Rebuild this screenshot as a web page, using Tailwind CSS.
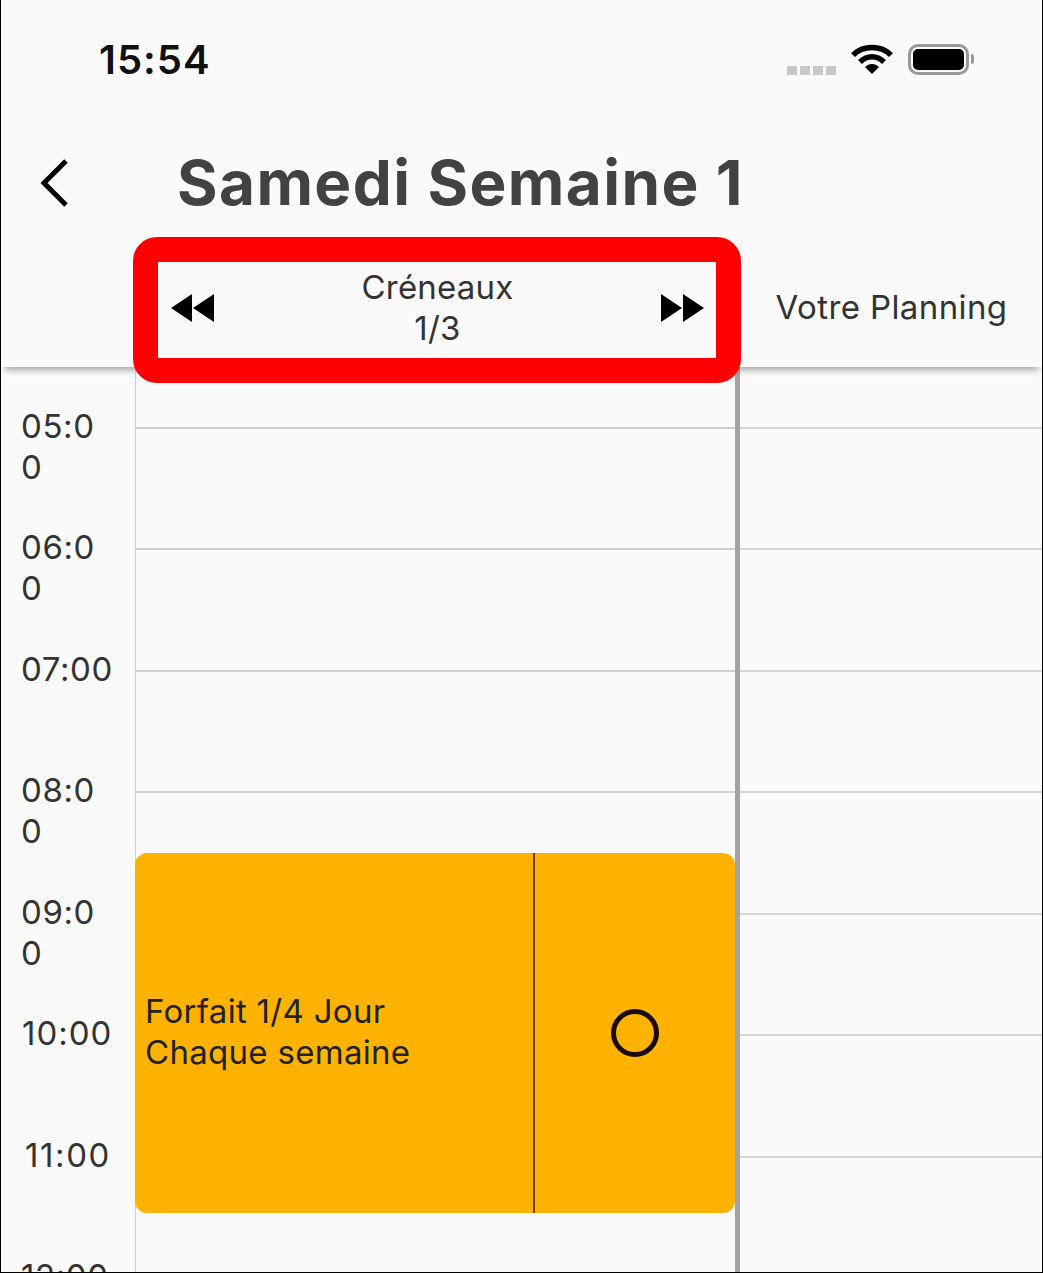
<!DOCTYPE html>
<html lang="fr">
<head>
    <meta charset="UTF-8">
    <meta name="viewport" content="width=device-width, initial-scale=1.0">
    <title>Samedi Semaine 1</title>
    <script src="https://cdn.jsdelivr.net/npm/@tailwindcss/browser@4"></script>
</head>

<body class="bg-[#fafafa]">
    <div class="relative flex h-[1273px] w-[1043px] flex-col overflow-hidden border-r border-b border-l border-black bg-[#fafafa] font-['Inter',sans-serif] text-[#333]">

        <!-- Status bar -->
        <div class="flex h-[120px] shrink-0 items-center pl-[98px] pr-[68px]">
            <span class="text-[40px] leading-none font-semibold tracking-[1px] text-[#111]">15:54</span>
            <div class="mb-[2px] ml-auto flex items-center">
                <div class="mt-[22px] flex gap-[3px]">
                    <span class="h-[9px] w-[10px] bg-[#c8c8c8]"></span>
                    <span class="h-[9px] w-[10px] bg-[#c8c8c8]"></span>
                    <span class="h-[9px] w-[10px] bg-[#c8c8c8]"></span>
                    <span class="h-[9px] w-[10px] bg-[#c8c8c8]"></span>
                </div>
                <svg class="ml-[15px]" width="42" height="30" viewBox="0 0 42 30">
                    <path d="M2 11 C12 1 30 1 40 11" fill="none" stroke="#000" stroke-width="5.5"/>
                    <path d="M9 18 C16 11 26 11 33 18" fill="none" stroke="#000" stroke-width="5.5"/>
                    <path d="M14 23 C18 19 24 19 28 23 L21 30 Z" fill="#000"/>
                </svg>
                <div class="ml-[15px] flex items-center">
                    <div class="h-[31px] w-[61px] rounded-[10px] border-[3px] border-[#999] p-[2px]">
                        <div class="h-full w-full rounded-[5px] bg-black"></div>
                    </div>
                    <span class="ml-[2px] h-[10px] w-[3px] rounded-r-sm bg-[#999]"></span>
                </div>
            </div>
        </div>

        <!-- Title -->
        <div class="relative flex h-[126px] shrink-0 items-center">
            <svg class="ml-[38px]" width="34" height="50" viewBox="0 0 34 50">
                <path d="M27 3 L5 25 L27 47" fill="none" stroke="#000" stroke-width="5"/>
            </svg>
            <h1 class="ml-[104px] text-[62px] leading-none font-bold tracking-[1.4px] text-[#424242]">Samedi Semaine 1</h1>
        </div>

        <!-- Column headers -->
        <div class="relative z-10 flex h-[121px] shrink-0 items-center pt-[2px] shadow-[0_7px_7px_-4px_rgba(0,0,0,0.35)]">
            <div class="w-[134px] shrink-0"></div>
            <div class="flex w-[606px] shrink-0 items-center justify-between pl-[35px] pr-[36px]">
                <svg width="44" height="30" viewBox="0 0 44 30"><path d="M22 1 V29 L1 15 Z M44 1 V29 L23 15 Z" fill="#000"/></svg>
                <div class="text-center text-[33px] leading-[41px] tracking-[0.2px]">Créneaux<br>1/3</div>
                <svg width="44" height="30" viewBox="0 0 44 30"><path d="M0 1 V29 L21 15 Z M22 1 V29 L43 15 Z" fill="#000"/></svg>
            </div>
            <div class="flex-1 text-center text-[33px] leading-[41px] tracking-[0.4px]">Votre Planning</div>
        </div>

        <!-- Timeline -->
        <div class="relative flex flex-1 overflow-hidden">
            <div class="w-[134px] shrink-0 pt-[38.5px] pl-[20px] text-[33px] leading-[41px] tracking-[0.6px]">
                <div class="h-[121.5px]">05:0<br>0</div>
                <div class="h-[121.5px]">06:0<br>0</div>
                <div class="h-[121.5px]">07:00</div>
                <div class="h-[121.5px]">08:0<br>0</div>
                <div class="h-[121.5px]">09:0<br>0</div>
                <div class="h-[121.5px] pl-[1px] tracking-[1px]">10:00</div>
                <div class="h-[121.5px] pl-[4px] tracking-[1.6px]">11:00</div>
                <div class="h-[121.5px]">12:00</div>
            </div>

            <div class="relative w-[605px] shrink-0 border-r-[5px] border-l border-r-[#a3a3a3] border-l-[#cfcfcf] pt-[59.5px]">
                <div class="h-[121.5px] border-t-2 border-[#cfcfcf]"></div>
                <div class="h-[121.5px] border-t-2 border-[#cfcfcf]"></div>
                <div class="h-[121.5px] border-t-2 border-[#cfcfcf]"></div>
                <div class="h-[121.5px] border-t-2 border-[#cfcfcf]"></div>
                <div class="h-[121.5px] border-t-2 border-[#cfcfcf]"></div>
                <div class="h-[121.5px] border-t-2 border-[#cfcfcf]"></div>
                <div class="h-[121.5px] border-t-2 border-[#cfcfcf]"></div>

                <!-- Event -->
                <div class="absolute top-[486px] left-[-1px] flex h-[360px] w-[600px] rounded-[12px] bg-[#ffb300] text-[#222]">
                    <div class="flex w-[400px] shrink-0 items-center border-r-2 border-[#6b3d00] pb-[2px] pl-[10px] text-[33px] leading-[41px] tracking-[0.3px]">
                        <div>Forfait 1/4 Jour<br>Chaque semaine</div>
                    </div>
                    <div class="flex flex-1 items-center justify-center">
                        <div class="h-[48px] w-[48px] rounded-full border-[5px] border-[#1a0a00]"></div>
                    </div>
                </div>
            </div>

            <div class="flex-1 pt-[59.5px]">
                <div class="h-[121.5px] border-t-2 border-[#d6d6d6]"></div>
                <div class="h-[121.5px] border-t-2 border-[#d6d6d6]"></div>
                <div class="h-[121.5px] border-t-2 border-[#d6d6d6]"></div>
                <div class="h-[121.5px] border-t-2 border-[#d6d6d6]"></div>
                <div class="h-[121.5px] border-t-2 border-[#d6d6d6]"></div>
                <div class="h-[121.5px] border-t-2 border-[#d6d6d6]"></div>
                <div class="h-[121.5px] border-t-2 border-[#d6d6d6]"></div>
            </div>
        </div>

        <!-- Red annotation -->
        <div class="absolute top-[237px] left-[132px] z-20 h-[146px] w-[608px] rounded-[24px] border-[25px] border-[#ff0000]"></div>
    </div>
</body>
</html>
